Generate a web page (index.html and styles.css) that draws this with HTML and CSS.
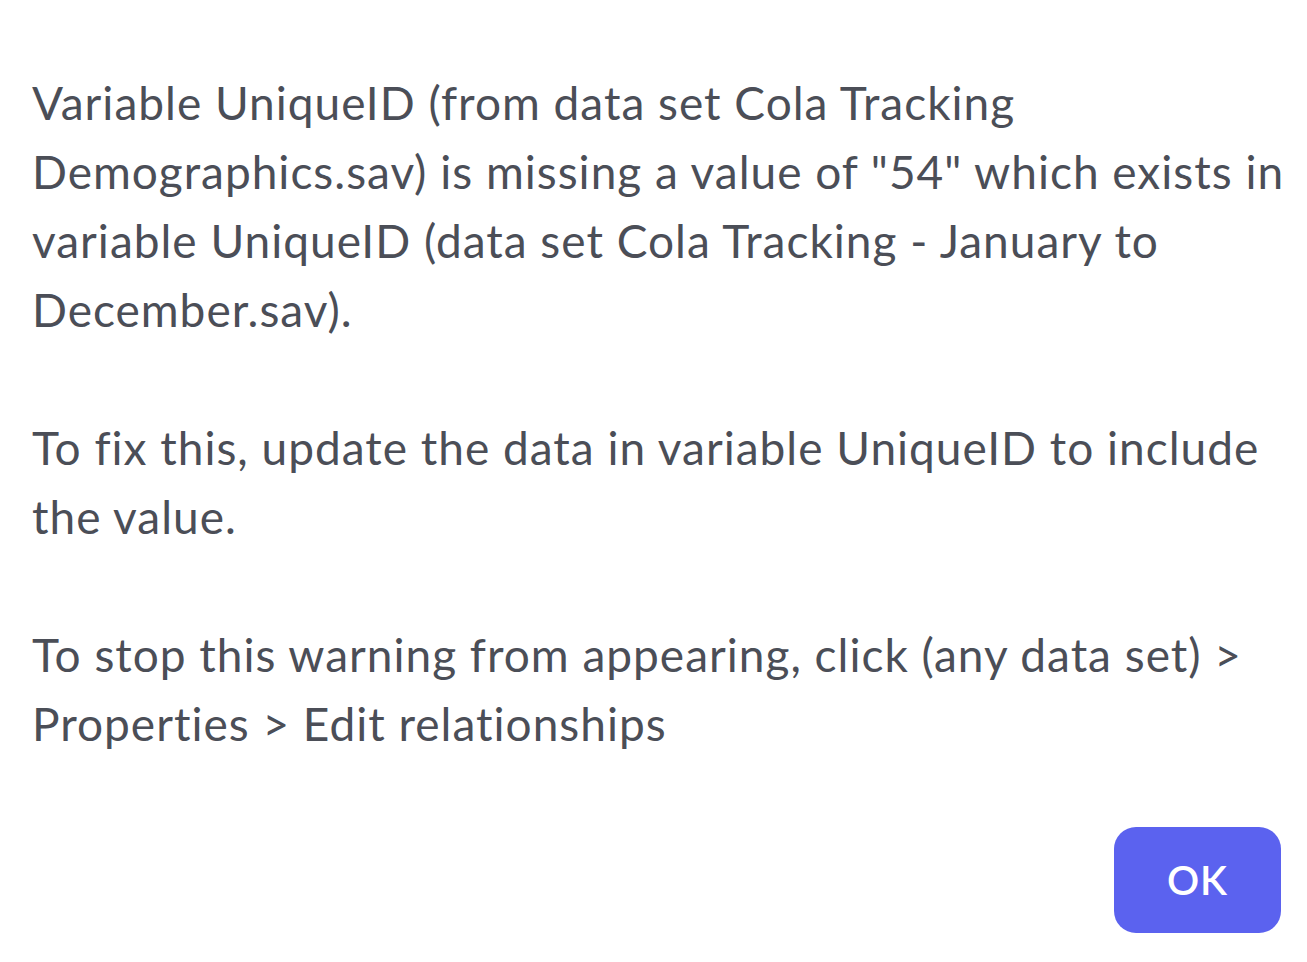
FILE: index.html
```html
<!DOCTYPE html>
<html lang="en">
<head>
  <meta charset="UTF-8">
  <meta name="viewport" content="width=device-width, initial-scale=1.0">
  <title>Warning</title>
  <link rel="stylesheet" href="styles.css">
</head>
<body>
  <div class="dialog">
    <div class="message">
      <p>Variable UniqueID (from data set Cola Tracking Demographics.sav) is missing a value of "54" which exists in variable UniqueID (data set Cola Tracking - January to December.sav).</p>
      <p>To fix this, update the data in variable UniqueID to include the value.</p>
      <p>To stop this warning from appearing, click (any data set) &gt; Properties &gt; Edit relationships</p>
    </div>

    <div class="actions">
      <button class="ok">OK</button>
    </div>
  </div>
</body>
</html>
```

FILE: styles.css
```css
body {
  font-family: Lato, "Noto Sans", sans-serif;
  background: #fff;
  margin: 0;
  padding: 0;
}

.dialog {
  padding: 68px 26px 0 32px;
}

.message {
  color: #4b4e57;
  font-size: 46px;
  line-height: 69px;
  letter-spacing: 1px;
  margin-right: -8px;
}

.message p {
  margin: 0 0 69px 0;
}

.message p:last-child {
  margin-bottom: 0;
}

.actions {
  display: flex;
  justify-content: flex-end;
  margin-top: 69px;
}

.ok {
  background-color: #5b62ef;
  color: white;
  font-family: inherit;
  font-size: 40px;
  font-weight: 600;
  letter-spacing: 1px;
  width: 167px;
  height: 106px;
  border: none;
  border-radius: 22px;
  cursor: pointer;
}
```
